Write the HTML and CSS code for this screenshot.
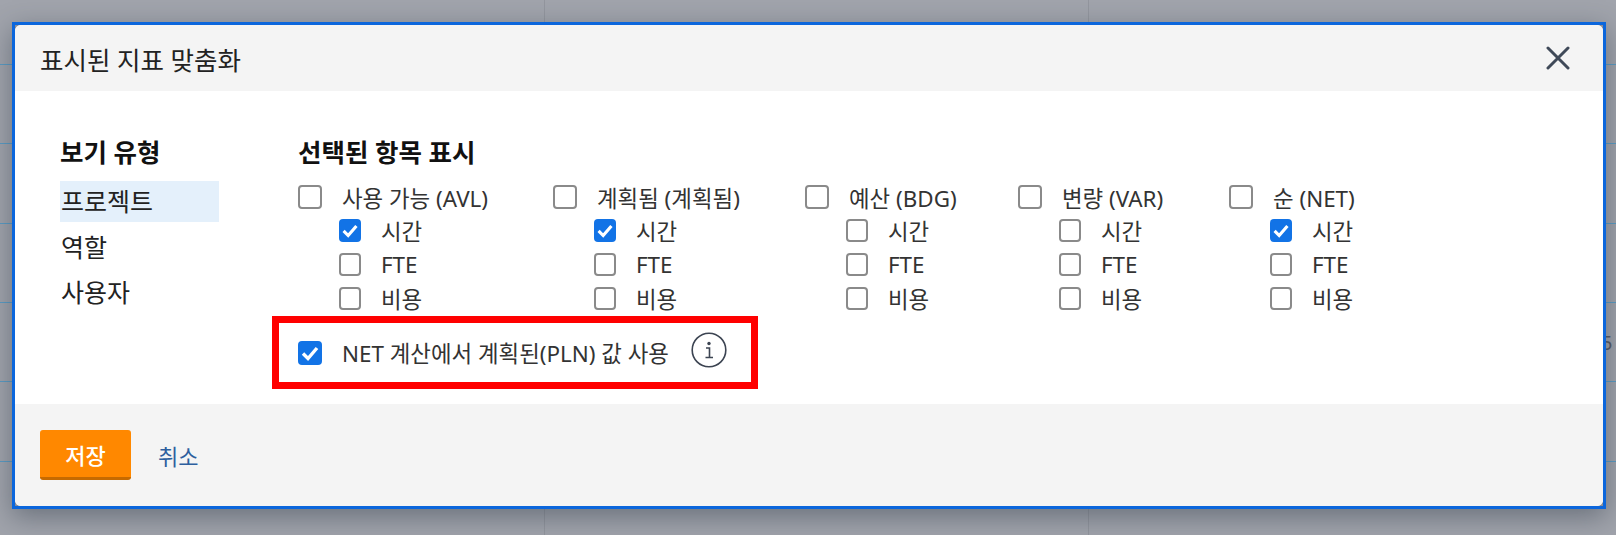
FILE: index.html
```html
<!DOCTYPE html>
<html lang="ko">
<head>
    <meta charset="UTF-8">
    <meta name="viewport" content="width=device-width, initial-scale=1.0">
    <title>표시된 지표 맞춤화</title>
    <link rel="stylesheet" href="styles.css">
</head>
<body>
    <span class="behind-digit">5</span>

    <div class="modal-frame">
        <div class="modal">
            <div class="modal-header">
                <h1>표시된 지표 맞춤화</h1>
                <svg class="close-icon" viewBox="0 0 24 24" aria-label="닫기">
                    <path d="M2 2 L22 22 M22 2 L2 22"></path>
                </svg>
            </div>

            <div class="modal-body">
                <div class="view-type">
                    <h2>보기 유형</h2>
                    <div class="view-item selected">프로젝트</div>
                    <div class="view-item">역할</div>
                    <div class="view-item">사용자</div>
                </div>

                <div class="metrics">
                    <h2>선택된 항목 표시</h2>
                    <div class="metric-columns">
                        <div class="metric col-avl">
                            <label class="check-main"><span class="box"></span>사용 가능 (AVL)</label>
                            <label class="check-sub"><span class="box checked"><svg viewBox="0 0 24 24"><path d="M5 12.5 L10 17.5 L19 7"></path></svg></span>시간</label>
                            <label class="check-sub"><span class="box"></span>FTE</label>
                            <label class="check-sub"><span class="box"></span>비용</label>
                        </div>
                        <div class="metric col-pln">
                            <label class="check-main"><span class="box"></span>계획됨 (계획됨)</label>
                            <label class="check-sub"><span class="box checked"><svg viewBox="0 0 24 24"><path d="M5 12.5 L10 17.5 L19 7"></path></svg></span>시간</label>
                            <label class="check-sub"><span class="box"></span>FTE</label>
                            <label class="check-sub"><span class="box"></span>비용</label>
                        </div>
                        <div class="metric col-bdg">
                            <label class="check-main"><span class="box"></span>예산 (BDG)</label>
                            <label class="check-sub"><span class="box"></span>시간</label>
                            <label class="check-sub"><span class="box"></span>FTE</label>
                            <label class="check-sub"><span class="box"></span>비용</label>
                        </div>
                        <div class="metric col-var">
                            <label class="check-main"><span class="box"></span>변량 (VAR)</label>
                            <label class="check-sub"><span class="box"></span>시간</label>
                            <label class="check-sub"><span class="box"></span>FTE</label>
                            <label class="check-sub"><span class="box"></span>비용</label>
                        </div>
                        <div class="metric col-net">
                            <label class="check-main"><span class="box"></span>순 (NET)</label>
                            <label class="check-sub"><span class="box checked"><svg viewBox="0 0 24 24"><path d="M5 12.5 L10 17.5 L19 7"></path></svg></span>시간</label>
                            <label class="check-sub"><span class="box"></span>FTE</label>
                            <label class="check-sub"><span class="box"></span>비용</label>
                        </div>
                    </div>

                    <div class="net-option">
                        <label class="check-main"><span class="box checked"><svg viewBox="0 0 24 24"><path d="M5 12.5 L10 17.5 L19 7"></path></svg></span>NET 계산에서 계획된(PLN) 값 사용</label>
                        <svg class="info-icon" viewBox="0 0 36 36" aria-label="정보">
                            <circle cx="18" cy="18" r="16.8"></circle>
                            <circle class="dot" cx="18" cy="11.5" r="1.7"></circle>
                            <path d="M15 16 H18.5 V25 M14.5 25.5 H22"></path>
                        </svg>
                    </div>
                </div>
            </div>

            <div class="modal-footer">
                <button class="btn-save">저장</button>
                <a class="btn-cancel" href="#">취소</a>
            </div>
        </div>
    </div>
</body>
</html>
```

FILE: styles.css
```css
* {
    box-sizing: border-box;
}

html, body {
    height: 100%;
}

body {
    margin: 0;
    padding: 22px 10px 0 12px;
    overflow: hidden;
    font-family: "Noto Sans", "Noto Sans CJK KR", sans-serif;
    color: #333;
    background-color: #a1a4ac;
    background-image:
        repeating-linear-gradient(to bottom, transparent 0, transparent 64px, #5a9cc4 64px, #5a9cc4 65px, transparent 65px, transparent 79.3px),
        linear-gradient(to right, transparent 544px, #93969e 544px, #93969e 545px, transparent 545px),
        linear-gradient(to right, transparent 1088px, #93969e 1088px, #93969e 1089px, transparent 1089px);
}

/* the digit peeking out from the table behind the dialog */
.behind-digit {
    position: absolute;
    left: 1601px;
    top: 329px;
    font-size: 20px;
    color: #565b66;
}

.modal-frame {
    position: relative;
    height: 487px;
    border: 3px solid #0b66dc;
    background: #8b8f98;
    box-shadow: 0 8px 26px rgba(40, 50, 65, 0.45);
}

.modal {
    height: 100%;
    display: flex;
    flex-direction: column;
    background: #fff;
    border-radius: 6px;
    overflow: hidden;
}

.modal-header {
    height: 66px;
    flex: none;
    display: flex;
    align-items: center;
    justify-content: space-between;
    padding: 0 33px 0 25px;
    background: #f4f4f4;
}

.modal-header h1 {
    margin: 0;
    font-size: 25.5px;
    font-weight: 400;
    color: #222;
}

.close-icon {
    width: 24px;
    height: 24px;
    fill: none;
    stroke: #3f4958;
    stroke-width: 3;
    stroke-linecap: round;
}

.modal-body {
    flex: 1;
    display: flex;
    padding: 44px 0 0 45px;
}

.view-type {
    width: 238px;
    flex: none;
}

h2 {
    margin: 0;
    font-size: 25.5px;
    font-weight: 700;
    line-height: 34px;
    color: #111;
}

.view-item {
    width: 159px;
    height: 45px;
    line-height: 45px;
    padding-left: 1px;
    font-size: 25px;
    color: #222;
}

.view-item.selected {
    height: 41px;
    line-height: 41px;
    margin: 12px 0 3px;
    background: #e4f0fb;
}

.metrics {
    flex: 1;
}

.metric-columns {
    display: flex;
    margin-top: 16px;
}

.metric {
    flex: none;
}

.col-avl { width: 255px; }
.col-pln { width: 252px; }
.col-bdg { width: 213px; }
.col-var { width: 211px; }

label {
    display: flex;
    align-items: center;
    font-size: 22.4px;
    color: #333;
}

.check-main {
    height: 24px;
}

.check-main .box {
    width: 24px;
    height: 24px;
    margin-right: 20px;
}

.check-sub {
    height: 34px;
    margin-left: 41px;
}

.check-main + .check-sub {
    margin-top: 4px;
}

.box {
    flex: none;
    width: 22px;
    height: 23px;
    margin-right: 20px;
    border: 2px solid #8a8a8a;
    border-radius: 4px;
    background: #fff;
}

.box.checked {
    border: none;
    background: #1273e6;
}

.box svg {
    display: block;
    width: 100%;
    height: 100%;
    fill: none;
    stroke: #fff;
    stroke-width: 3.4;
}

.net-option {
    display: flex;
    align-items: center;
    width: 486px;
    height: 73px;
    margin: 1px 0 0 -26px;
    padding-left: 19px;
    border: 7px solid #ff0000;
}

.info-icon {
    width: 36px;
    height: 36px;
    margin: 0 0 5px 22px;
    fill: none;
    stroke: #3c4452;
    stroke-width: 1.6;
}

.info-icon .dot {
    fill: #3c4452;
    stroke: none;
}

.modal-footer {
    height: 102px;
    flex: none;
    display: flex;
    align-items: center;
    padding: 0 0 0 25px;
    background: #f4f4f4;
}

.btn-save {
    width: 91px;
    height: 50px;
    border: none;
    border-bottom: 3px solid #c66a00;
    border-radius: 3px;
    background: #ff8800;
    color: #fff;
    font-family: inherit;
    font-size: 22px;
    font-weight: 500;
}

.btn-cancel {
    margin-left: 27px;
    font-size: 22px;
    color: #2d5f9e;
    text-decoration: none;
}
```
